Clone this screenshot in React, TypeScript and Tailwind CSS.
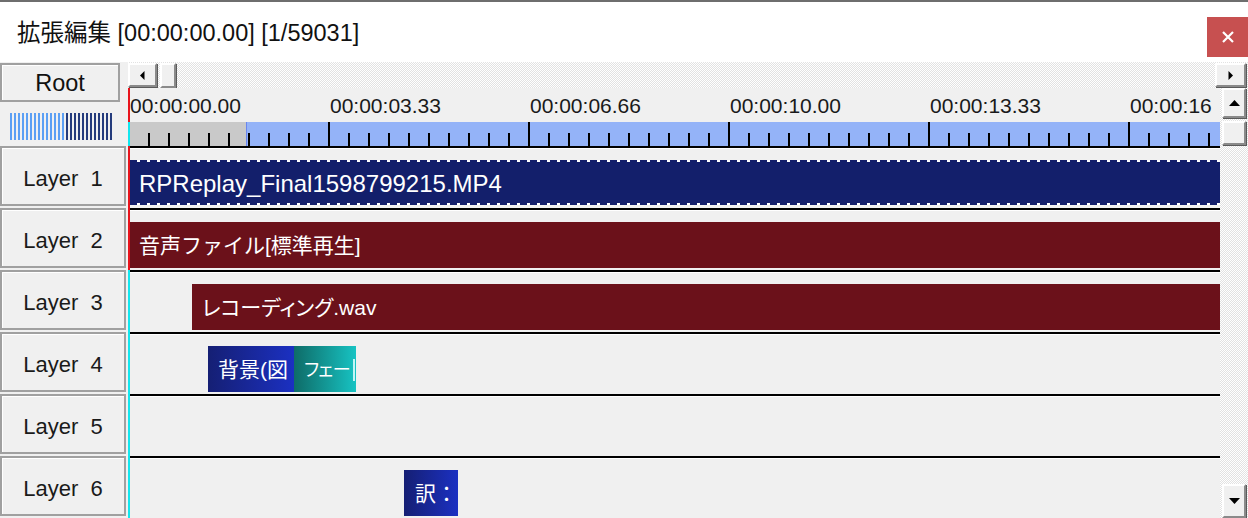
const TIME_LABELS = ['00:00:00.00', '00:00:03.33', '00:00:06.66', '00:00:10.00', '00:00:13.33', '00:00:16'];

const TICKS = Array.from({ length: 54 }, (_, i) => i + 1);

const LAYERS = ['Layer  1', 'Layer  2', 'Layer  3', 'Layer  4', 'Layer  5', 'Layer  6'];

const btn3d =
  'bg-[#f0f0f0] border-t-2 border-l-2 border-t-white border-l-white border-r-2 border-b-2 border-r-[#8a8a8a] border-b-[#8a8a8a] shadow-[1px_1px_0_#5a5a5a]';

const dither = 'bg-[image:repeating-conic-gradient(#e2e2e2_0_25%,#ffffff_0_50%)] bg-[length:2px_2px]';

const TickBar = () => (
  <svg width="1092" height="24" className="block">
    <rect x="0" y="0" width="118" height="24" fill="#c9c9c9" />
    <rect x="118" y="0" width="974" height="24" fill="#94b3f8" />
    <rect x="118" y="0" width="1" height="24" fill="#6a86ef" />
    {TICKS.map((k) =>
      k % 10 === 0 ? (
        <rect key={k} x={20 * k} y="0" width="2" height="24" fill="#000" />
      ) : (
        <rect key={k} x={20 * k} y="11" width="2" height="13" fill="#000" />
      )
    )}
  </svg>
);

const Row = ({ children }: { children?: React.ReactNode }) => (
  <div className="h-[62px] flex flex-col bg-[#f0f0f0]">
    <div className="h-[2px] bg-black shrink-0" />
    <div className="h-[1px] bg-white shrink-0" />
    <div className="flex mt-[11px] h-[46px]">{children}</div>
  </div>
);

const App = () => {
  return (
    <div className="w-[1248px] h-[518px] overflow-hidden bg-white border-t-2 border-[#6e6e6e] font-['Liberation_Sans','Noto_Sans_CJK_JP',sans-serif] text-[#111]">
      {/* title bar */}
      <div className="h-[60px] flex items-start">
        <div className="mt-[16px] pl-[17px] text-[23.5px] leading-[30px] whitespace-pre">拡張編集 [00:00:00.00] [1/59031]</div>
        <div className="ml-auto mt-[15px] w-[41px] h-[40px] bg-[#c75050] flex items-center justify-center">
          <svg width="12" height="12" viewBox="0 0 12 12">
            <path d="M1 1L11 11M11 1L1 11" stroke="#fff" strokeWidth="2.2" />
          </svg>
        </div>
      </div>

      <div className="flex h-[456px]">
        {/* left column */}
        <div className="w-[128px] shrink-0 bg-[#f0f0f0] flex flex-col">
          <div className="pt-[1px] h-[40px]">
            <div className="w-[120px] h-[39px] border-2 border-[#a0a0a0] shadow-[inset_1px_1px_0_#fff] flex items-center justify-center pt-[2px] text-[23.5px]">
              Root
            </div>
          </div>
          <div className="h-[44px] pt-[11px] pl-[10px] flex">
            <div className="w-[56px] h-[27px] bg-[image:repeating-linear-gradient(90deg,#5b9ff4_0_2px,transparent_2px_4px)]" />
            <div className="w-[46px] h-[27px] bg-[image:repeating-linear-gradient(90deg,#243b7c_0_2px,transparent_2px_4px)]" />
          </div>
          {LAYERS.map((name) => (
            <div
              key={name}
              className="w-[126px] h-[60px] mb-[2px] shrink-0 border-2 border-[#a0a0a0] shadow-[inset_1px_1px_0_#fff] flex items-center justify-center pt-[5px] text-[22px] whitespace-pre text-[#1a1a1a]"
            >
              {name}
            </div>
          ))}
        </div>

        {/* timeline + scrollbars */}
        <div className="w-[1120px] flex flex-col">
          <div className={`h-[26px] flex items-start ${dither}`}>
            <div className={`w-[29px] h-[24px] mt-[1px] flex items-center justify-center ${btn3d}`}>
              <svg width="5" height="9" viewBox="0 0 5 9">
                <path d="M4.5 0L0 4.5L4.5 9Z" fill="#000" />
              </svg>
            </div>
            <div className={`w-[16px] h-[25px] mt-[1px] ml-[3px] ${btn3d}`} />
            <div className={`ml-auto mr-[2px] w-[31px] h-[24px] mt-[1px] flex items-center justify-center ${btn3d}`}>
              <svg width="5" height="9" viewBox="0 0 5 9">
                <path d="M0.5 0L5 4.5L0.5 9Z" fill="#000" />
              </svg>
            </div>
          </div>

          <div className="flex flex-1 min-h-0">
            <div className="w-[1092px] shrink-0 relative overflow-hidden">
              <div className="h-[34px] bg-[#f0f0f0] flex items-center pl-[2px] pt-[1px] text-[21px] text-[#1a1a1a]">
                {TIME_LABELS.map((t) => (
                  <div key={t} className="w-[200px] shrink-0 whitespace-pre">
                    {t}
                  </div>
                ))}
              </div>
              <TickBar />

              <Row>
                <div className="ml-[2px] w-[1090px] h-[45px] bg-[#131f6b] flex flex-col">
                  <div className="h-[2px] bg-[image:repeating-linear-gradient(90deg,#131f6b_0_7px,#ffffff_7px_10px)]" />
                  <div className="flex-1 flex items-center pl-[9px] pt-[2px] text-white text-[24px] whitespace-pre">RPReplay_Final1598799215.MP4</div>
                  <div className="h-[2px] bg-[image:repeating-linear-gradient(90deg,#131f6b_0_7px,#ffffff_7px_10px)]" />
                </div>
              </Row>
              <Row>
                <div className="ml-[2px] w-[1090px] bg-[#6b111a] flex items-center pl-[9px] pt-[2px] text-white text-[21px] whitespace-pre">
                  音声ファイル[標準再生]
                </div>
              </Row>
              <Row>
                <div className="ml-[64px] w-[1028px] bg-[#6b111a] flex items-center pl-[10px] pt-[2px] text-white text-[21px] whitespace-pre [font-feature-settings:'palt']">
                  レコーディング.wav
                </div>
              </Row>
              <Row>
                <div className="ml-[80px] w-[86px] bg-gradient-to-r from-[#151f74] to-[#1b30c2] overflow-hidden flex items-center pl-[10px] pt-[2px] text-white text-[21px] whitespace-pre">
                  背景(図
                </div>
                <div className="w-[62px] bg-gradient-to-r from-[#0e6c68] to-[#17c3c3] flex items-center pl-[10px] pt-[2px] text-white text-[18px] tracking-[-0.5px] whitespace-pre [font-feature-settings:'palt']">
                  <span>フェー</span>
                  <div className="ml-auto mr-[1px] w-[2px] h-[22px] bg-[#c0f6f6] shrink-0" />
                </div>
              </Row>
              <Row />
              <Row>
                <div className="ml-[276px] w-[54px] bg-gradient-to-r from-[#151f74] to-[#1b30c2] flex items-center pl-[11px] pt-[2px] text-white text-[21px] whitespace-pre">
                  訳：
                </div>
              </Row>

              {/* current frame / edit lines */}
              <div className="absolute left-0 top-0 w-[2px] h-[182px] bg-[#e8141c]" />
              <div className="absolute left-0 top-[34px] w-[2px] h-[24px] bg-[#12e6ee]" />
              <div className="absolute left-0 top-[182px] w-[2px] h-[300px] bg-[#12e6ee]" />
            </div>

            <div className={`w-[28px] shrink-0 flex flex-col items-center ${dither}`}>
              <div className={`w-[24px] h-[30px] flex items-center justify-center ${btn3d}`}>
                <svg width="11" height="6" viewBox="0 0 11 6">
                  <path d="M0 6L5.5 0L11 6Z" fill="#000" />
                </svg>
              </div>
              <div className={`w-[24px] h-[24px] mt-[3px] ${btn3d}`} />
              <div className={`w-[24px] h-[34px] mt-auto flex items-center justify-center ${btn3d}`}>
                <svg width="11" height="6" viewBox="0 0 11 6">
                  <path d="M0 0L11 0L5.5 6Z" fill="#000" />
                </svg>
              </div>
            </div>
          </div>
        </div>
      </div>
    </div>
  );
};

export default App;
